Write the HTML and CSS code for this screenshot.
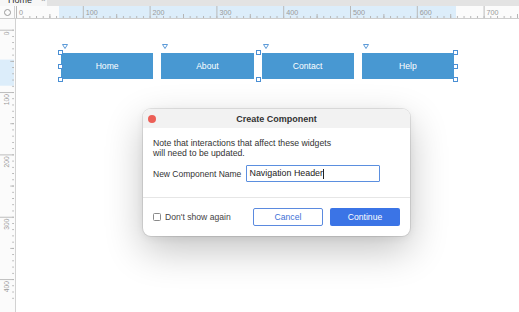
FILE: index.html
```html
<!DOCTYPE html>
<html>
<head>
<meta charset="utf-8">
<link rel="stylesheet" href="styles.css">
</head>
<body>
<div class="app">
  <div class="tabbar">
    <div class="tab"><span class="tab-label">Home</span><span class="tab-close">×</span></div>
  </div>
  <div class="ruler-row">
    <div class="corner">
      <svg width="15" height="12" viewBox="0 0 15 12"><circle cx="7.5" cy="6.5" r="3" fill="none" stroke="#9a9a9a" stroke-width="1"/></svg>
    </div>
    <svg class="hruler" width="504" height="12" viewBox="0 0 504 12">
      <defs>
        <pattern id="hminor" x="1" y="0" width="6.68" height="12" patternUnits="userSpaceOnUse">
          <rect x="0" y="10" width="1" height="2" fill="#b5b5b5"/>
        </pattern>
        <pattern id="hmid" x="34.4" y="0" width="66.8" height="12" patternUnits="userSpaceOnUse">
          <rect x="0" y="8" width="1" height="4" fill="#b5b5b5"/>
        </pattern>
        <pattern id="hmajor" x="1" y="0" width="66.8" height="12" patternUnits="userSpaceOnUse">
          <rect x="0" y="0" width="1" height="12" fill="#b9b9b9"/>
        </pattern>
      </defs>
      <rect x="44" y="0" width="397" height="12" fill="#dcedfa"/>
      <rect x="0" y="0" width="504" height="12" fill="url(#hminor)"/>
      <rect x="0" y="0" width="504" height="12" fill="url(#hmid)"/>
      <rect x="0" y="0" width="504" height="12" fill="url(#hmajor)"/>
      <g class="rl">
        <text x="4" y="8.7">0</text>
        <text x="70.8" y="8.7">100</text>
        <text x="137.6" y="8.7">200</text>
        <text x="204.4" y="8.7">300</text>
        <text x="271.2" y="8.7">400</text>
        <text x="338" y="8.7">500</text>
        <text x="404.8" y="8.7">600</text>
        <text x="471.6" y="8.7">700</text>
      </g>
    </svg>
  </div>
  <div class="workspace">
    <svg class="vruler" width="15" height="293" viewBox="0 0 15 293">
      <defs>
        <pattern id="vminor" x="0" y="1" width="15" height="6.68" patternUnits="userSpaceOnUse">
          <rect x="13" y="0" width="2" height="1" fill="#b5b5b5"/>
        </pattern>
        <pattern id="vmid" x="0" y="34.4" width="15" height="66.8" patternUnits="userSpaceOnUse">
          <rect x="11" y="0" width="4" height="1" fill="#b5b5b5"/>
        </pattern>
        <pattern id="vmajor" x="0" y="1" width="15" height="66.8" patternUnits="userSpaceOnUse">
          <rect x="0" y="0" width="15" height="1" fill="#b9b9b9"/>
        </pattern>
      </defs>
      <rect x="0" y="33" width="15" height="28" fill="#dcedfa"/>
      <rect x="0" y="0" width="15" height="293" fill="url(#vminor)"/>
      <rect x="0" y="0" width="15" height="293" fill="url(#vmid)"/>
      <rect x="0" y="0" width="15" height="293" fill="url(#vmajor)"/>
      <g class="rl">
        <text x="0" y="0" text-anchor="end" transform="translate(9.5 3) rotate(-90)">0</text>
        <text x="0" y="0" text-anchor="end" transform="translate(9.5 69.8) rotate(-90)">100</text>
        <text x="0" y="0" text-anchor="end" transform="translate(9.5 136.6) rotate(-90)">200</text>
        <text x="0" y="0" text-anchor="end" transform="translate(9.5 203.4) rotate(-90)">300</text>
        <text x="0" y="0" text-anchor="end" transform="translate(9.5 270.2) rotate(-90)">400</text>
      </g>
    </svg>
    <div class="canvas">
      <div class="nav-group">
        <div class="nav-btn"><svg class="tri" width="6" height="5" viewBox="0 0 6 5"><path d="M0.5 0.5H5.5L3 4.5Z" fill="#fff" stroke="#4a8fd4" stroke-width="0.9"/></svg>Home</div>
        <div class="nav-btn"><svg class="tri" width="6" height="5" viewBox="0 0 6 5"><path d="M0.5 0.5H5.5L3 4.5Z" fill="#fff" stroke="#4a8fd4" stroke-width="0.9"/></svg>About</div>
        <div class="nav-btn"><svg class="tri" width="6" height="5" viewBox="0 0 6 5"><path d="M0.5 0.5H5.5L3 4.5Z" fill="#fff" stroke="#4a8fd4" stroke-width="0.9"/></svg>Contact</div>
        <div class="nav-btn"><svg class="tri" width="6" height="5" viewBox="0 0 6 5"><path d="M0.5 0.5H5.5L3 4.5Z" fill="#fff" stroke="#4a8fd4" stroke-width="0.9"/></svg>Help</div>
        <span class="handle h-tl"></span>
        <span class="handle h-ml"></span>
        <span class="handle h-bl"></span>
        <span class="handle h-tm"></span>
        <span class="handle h-bm"></span>
        <span class="handle h-tr"></span>
        <span class="handle h-mr"></span>
        <span class="handle h-br"></span>
      </div>

      <div class="dialog">
        <div class="dialog-title">
          <span class="close-dot"></span>
          <span class="title-text">Create Component</span>
          <span></span>
        </div>
        <div class="dialog-body">
          <p class="note">Note that interactions that affect these widgets<br>will need to be updated.</p>
          <div class="field-row">
            <span class="field-label">New Component Name</span>
            <div class="text-input">Navigation Header<span class="caret"></span></div>
          </div>
        </div>
        <div class="dialog-footer">
          <div class="check"><span class="check-box"></span><span>Don't show again</span></div>
          <div class="actions">
            <div class="btn btn-secondary">Cancel</div>
            <div class="btn btn-primary">Continue</div>
          </div>
        </div>
      </div>
    </div>
  </div>
</div>
</body>
</html>
```

FILE: styles.css
```css
* { box-sizing: border-box; }

html, body {
  margin: 0;
  padding: 0;
}

body {
  width: 519px;
  height: 312px;
  overflow: hidden;
  background: #ffffff;
  font-family: "Liberation Sans", Arial, sans-serif;
  color: #333333;
}

.app {
  display: flex;
  flex-direction: column;
  height: 312px;
}

/* tab bar */
.tabbar {
  height: 6px;
  flex: none;
  display: flex;
  background: #e3e3e3;
  overflow: hidden;
}

.tab {
  width: 47px;
  height: 6px;
  background: #f7f7f7;
  display: flex;
  align-items: flex-end;
  padding-left: 8px;
}

.tab-label,
.tab-close {
  height: 12px;
  line-height: 12px;
  font-size: 9px;
  flex: none;
}

.tab-label { color: #333333; }

.tab-close {
  margin-left: 9px;
  color: #999999;
  font-size: 8px;
}

/* rulers */
.ruler-row {
  display: flex;
  height: 13px;
  flex: none;
  background: #fbfbfb;
  border-bottom: 1px solid #cdcdcd;
}

.corner {
  width: 15px;
  height: 12px;
  border-right: 1px solid #d2d2d2;
  flex: none;
}

.corner svg,
.hruler,
.vruler {
  display: block;
}

.hruler { flex: none; }

.rl text {
  font-family: "Liberation Sans", Arial, sans-serif;
  font-size: 7.2px;
  fill: #9a9a9a;
}

.workspace {
  flex: 1;
  display: flex;
  min-height: 0;
}

.vruler {
  flex: none;
  background: #fbfbfb;
  border-right: 1px solid #d2d2d2;
  width: 16px;
  padding-right: 1px;
}

/* canvas */
.canvas {
  flex: 1;
  position: relative;
  background: #ffffff;
}

.nav-group {
  position: relative;
  margin-left: 45px;
  margin-top: 34px;
  width: 393px;
  height: 26px;
  display: flex;
  gap: 8px;
}

.nav-btn {
  position: relative;
  flex: 1;
  background: #4898d2;
  color: #ffffff;
  font-size: 8.6px;
  display: flex;
  align-items: center;
  justify-content: center;
}

.tri {
  position: absolute;
  left: 1px;
  top: -9px;
  display: block;
}

.handle {
  position: absolute;
  width: 5px;
  height: 5px;
  background: #ffffff;
  border: 1px solid #4a8fd4;
}

.h-tl { left: -3.5px; top: -3px; }
.h-ml { left: -3.5px; top: 10.5px; }
.h-bl { left: -3.5px; bottom: -3px; }
.h-tm { left: 194.5px; top: -3px; }
.h-bm { left: 194.5px; bottom: -3px; }
.h-tr { right: -3.5px; top: -3px; }
.h-mr { right: -3.5px; top: 10.5px; }
.h-br { right: -3.5px; bottom: -3px; }

/* dialog */
.dialog {
  position: absolute;
  left: 127px;
  top: 90px;
  width: 267px;
  background: #ffffff;
  border-radius: 8px;
  overflow: hidden;
  box-shadow: 0 0 0 1px rgba(0, 0, 0, 0.09), 0 14px 38px rgba(0, 0, 0, 0.24), 0 2px 8px rgba(0, 0, 0, 0.06);
}

.dialog-title {
  height: 19px;
  background: #f2f2f2;
  display: grid;
  grid-template-columns: 1fr auto 1fr;
  align-items: center;
}

.close-dot {
  width: 8px;
  height: 8px;
  border-radius: 50%;
  background: #ec5f57;
  margin-left: 5px;
}

.title-text {
  font-size: 9px;
  font-weight: bold;
  color: #333333;
}

.dialog-body {
  padding: 10px 10px 15px;
  border-bottom: 1px solid #e6e6e6;
}

.note {
  margin: 0;
  font-size: 8.7px;
  line-height: 10px;
  color: #333333;
}

.field-row {
  display: flex;
  align-items: center;
  margin-top: 7px;
}

.field-label {
  font-size: 8.5px;
  color: #333333;
  width: 92.5px;
  flex: none;
}

.text-input {
  width: 134px;
  height: 17px;
  border: 1px solid #5b8fdf;
  border-radius: 1px;
  padding-left: 3px;
  font-size: 8.9px;
  line-height: 15px;
  color: #222222;
  display: flex;
  align-items: center;
}

.caret {
  width: 1px;
  height: 10px;
  background: #222222;
  margin-left: 0;
}

.dialog-footer {
  display: flex;
  align-items: center;
  justify-content: space-between;
  padding: 10px 10px 10px 10px;
}

.check {
  display: flex;
  align-items: center;
  gap: 4.5px;
  font-size: 8.6px;
  color: #444444;
}

.check-box {
  width: 7.5px;
  height: 7.5px;
  border: 1px solid #8a8a8a;
  border-radius: 1.5px;
  background: #ffffff;
}

.actions {
  display: flex;
  gap: 7px;
}

.btn {
  width: 70px;
  height: 18px;
  border-radius: 2px;
  font-size: 8.6px;
  display: flex;
  align-items: center;
  justify-content: center;
}

.btn-secondary {
  background: #ffffff;
  border: 1px solid #5b8adf;
  color: #3d70d6;
}

.btn-primary {
  background: #3b74e6;
  color: #ffffff;
}
```
